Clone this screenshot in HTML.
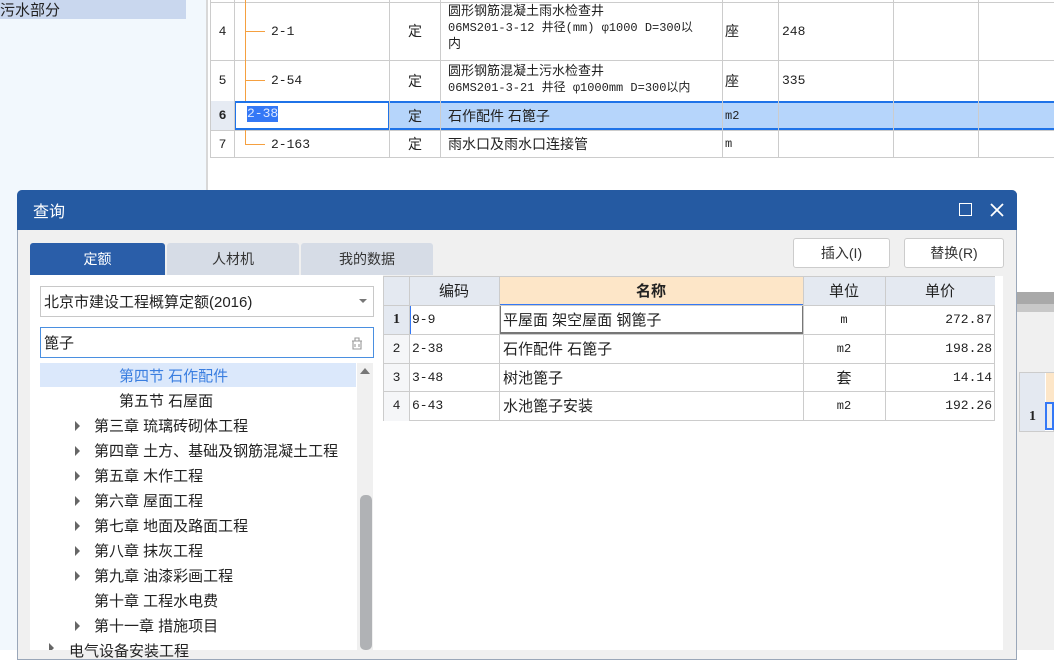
<!DOCTYPE html>
<html><head><meta charset="utf-8"><style>
*{margin:0;padding:0;box-sizing:border-box}
body{width:1054px;height:650px;overflow:hidden;position:relative;background:#fff;font-family:"Liberation Sans","Noto Sans CJK SC",sans-serif;font-size:14px;color:#222}
.a{position:absolute}
.c{position:absolute;display:flex;align-items:center;white-space:nowrap;overflow:hidden}
.m{font-family:"Liberation Mono","Noto Sans CJK SC",monospace;font-size:13px}
</style></head><body>
<!-- left nav -->
<div class="a" style="left:0;top:0;width:208px;height:650px;background:#f2f8fd;border-right:2px solid #d8d8d8"></div>
<div class="c" style="left:0;top:0;width:186px;height:19px;background:#c9d7ee;font-size:15px">污水部分</div>
<!-- main table -->
<div class="a" style="left:210px;top:0;width:844px;height:158px;border-bottom:1px solid #ccc"></div>
<div class="a" style="left:210px;top:101px;width:844px;height:29px;background:#b6d5fb"></div>
<div class="a" style="left:210px;top:101px;width:25px;height:29px;background:#e6ebf3"></div>
<div class="a" style="left:234px;top:101px;width:156px;height:29px;background:#fff;border:2px solid #1f73e8"></div>
<div class="a" style="left:389px;top:101px;width:665px;height:29px;border-top:2px solid #1f73e8;border-bottom:2px solid #1f73e8"></div>
<!-- horizontal lines -->
<div class="a" style="left:210px;top:2px;width:844px;height:1px;background:#ccc"></div>
<div class="a" style="left:210px;top:60px;width:844px;height:1px;background:#ccc"></div>
<div class="a" style="left:210px;top:130px;width:844px;height:1px;background:#ccc"></div>
<!-- vertical lines -->
<div class="a" style="left:210px;top:0;width:1px;height:158px;background:#ccc"></div>
<div class="a" style="left:234px;top:0;width:1px;height:158px;background:#ccc"></div>
<div class="a" style="left:389px;top:0;width:1px;height:158px;background:#ccc"></div>
<div class="a" style="left:440px;top:0;width:1px;height:158px;background:#ccc"></div>
<div class="a" style="left:722px;top:0;width:1px;height:158px;background:#ccc"></div>
<div class="a" style="left:778px;top:0;width:1px;height:158px;background:#ccc"></div>
<div class="a" style="left:893px;top:0;width:1px;height:158px;background:#ccc"></div>
<div class="a" style="left:978px;top:0;width:1px;height:158px;background:#ccc"></div>
<!-- orange tree lines -->
<div class="a" style="left:245px;top:0;width:1px;height:101px;background:#f5a040"></div>
<div class="a" style="left:245px;top:130px;width:1px;height:14px;background:#f5a040"></div>
<div class="a" style="left:245px;top:31px;width:20px;height:1px;background:#f5a040"></div>
<div class="a" style="left:245px;top:80px;width:20px;height:1px;background:#f5a040"></div>
<div class="a" style="left:245px;top:144px;width:20px;height:1px;background:#f5a040"></div>
<div class="c m" style="left:210px;top:2px;width:25px;height:58px;justify-content:center">4</div>
<div class="c m" style="left:210px;top:60px;width:25px;height:41px;justify-content:center">5</div>
<div class="c m" style="left:210px;top:101px;width:25px;height:29px;justify-content:center;font-weight:bold">6</div>
<div class="c m" style="left:210px;top:130px;width:25px;height:28px;justify-content:center">7</div>
<div class="c m" style="left:271px;top:2px;height:58px">2-1</div>
<div class="c m" style="left:271px;top:60px;height:41px">2-54</div>
<div class="a m" style="left:247px;top:106px;height:16px;background:#3478f6;color:#dfe9ff;line-height:16px">2-38</div>
<div class="c m" style="left:271px;top:130px;height:28px">2-163</div>
<div class="c" style="left:390px;top:2px;width:50px;height:58px;justify-content:center">定</div>
<div class="c" style="left:390px;top:60px;width:50px;height:41px;justify-content:center">定</div>
<div class="c" style="left:390px;top:101px;width:50px;height:29px;justify-content:center">定</div>
<div class="c" style="left:390px;top:130px;width:50px;height:28px;justify-content:center">定</div>
<div class="a" style="left:448px;top:3px;width:272px;font-size:13px;line-height:16px;overflow:hidden">圆形钢筋混凝土雨水检查井<br><span class="m" style="font-size:12px">06MS201-3-12 井径(mm) φ1000 D=300以</span><br>内</div>
<div class="a" style="left:448px;top:63px;width:272px;font-size:13px;line-height:16px;overflow:hidden">圆形钢筋混凝土污水检查井<br><span class="m" style="font-size:12px">06MS201-3-21 井径 φ1000mm D=300以内</span></div>
<div class="c" style="left:448px;top:101px;height:29px">石作配件 石篦子</div>
<div class="c" style="left:448px;top:130px;height:28px">雨水口及雨水口连接管</div>
<div class="c" style="left:725px;top:2px;height:58px">座</div>
<div class="c" style="left:725px;top:60px;height:41px">座</div>
<div class="c m" style="left:725px;top:101px;height:29px;font-size:12px">m2</div>
<div class="c m" style="left:725px;top:130px;height:28px;font-size:12px">m</div>
<div class="c m" style="left:782px;top:2px;height:58px">248</div>
<div class="c m" style="left:782px;top:60px;height:41px">335</div>
<!-- behind right strip -->
<div class="a" style="left:1016px;top:292px;width:38px;height:12px;background:#a9a9a9"></div>
<div class="a" style="left:1016px;top:304px;width:38px;height:8px;background:#c8c8c8"></div>
<div class="a" style="left:1016px;top:312px;width:38px;height:338px;background:#f0f0f0"></div>
<div class="a" style="left:1019px;top:372px;width:35px;height:60px;background:#fff;border:1px solid #ccc"></div>
<div class="a" style="left:1020px;top:373px;width:25px;height:58px;background:#e4e9f1"></div>
<div class="a" style="left:1046px;top:373px;width:8px;height:29px;background:#fde6c8"></div>
<div class="a" style="left:1045px;top:402px;width:9px;height:28px;background:#eee;border:2px solid #3478f6"></div>
<div class="c" style="left:1020px;top:402px;width:25px;height:29px;justify-content:center;font-weight:bold;font-family:'Liberation Serif',serif">1</div>
<!-- dialog -->
<div class="a" style="left:17px;top:190px;width:1000px;height:470px;background:#f0f0f0;border:1px solid #9aa7b9;border-radius:5px 5px 0 0"></div>
<div class="a" style="left:17px;top:190px;width:1000px;height:40px;background:#255aa2;border-radius:5px 5px 0 0"></div>
<div class="c" style="left:33px;top:190px;height:40px;color:#fff;font-size:16px">查询</div>
<div class="a" style="left:959px;top:203px;width:13px;height:13px;border:1.5px solid #fff"></div>
<svg class="a" style="left:990px;top:203px" width="14" height="14"><path d="M1 1L13 13M13 1L1 13" stroke="#fff" stroke-width="1.8"/></svg>
<!-- tabs -->
<div class="c" style="left:30px;top:243px;width:135px;height:32px;background:#2a5ea9;color:#fff;justify-content:center;border-radius:3px 3px 0 0">定额</div>
<div class="c" style="left:167px;top:243px;width:132px;height:32px;background:#d6dce6;color:#333;justify-content:center;border-radius:3px 3px 0 0">人材机</div>
<div class="c" style="left:301px;top:243px;width:132px;height:32px;background:#d6dce6;color:#333;justify-content:center;border-radius:3px 3px 0 0">我的数据</div>
<div class="c" style="left:793px;top:238px;width:97px;height:30px;background:#fff;border:1px solid #ccc;border-radius:3px;justify-content:center;color:#333">插入(I)</div>
<div class="c" style="left:904px;top:238px;width:100px;height:30px;background:#fff;border:1px solid #ccc;border-radius:3px;justify-content:center;color:#333">替换(R)</div>
<!-- left pane -->
<div class="a" style="left:30px;top:275px;width:353px;height:375px;background:#fff"></div>
<div class="c" style="left:40px;top:286px;width:334px;height:31px;border:1px solid #c8c8c8;padding-left:3px;font-size:15px">北京市建设工程概算定额(2016)</div>
<svg class="a" style="left:359px;top:299px" width="8" height="5"><path d="M0 0H8L4 4Z" fill="#777"/></svg>
<div class="c" style="left:40px;top:327px;width:334px;height:31px;border:1px solid #4a8fe0;padding-left:3px;font-size:15px">篦子</div>
<svg class="a" style="left:349px;top:335px" width="16" height="16"><path d="M3 6H13M4 6V14H12V6M6 6V3H10V6M6 9V12M10 9V12" stroke="#999" fill="none" stroke-width="1.1"/></svg>
<div class="a" style="left:40px;top:363px;width:316px;height:24px;background:#dbe8fb"></div>
<div class="a" style="left:357px;top:363px;width:16px;height:287px;background:#f0f0f0"></div>
<div class="a" style="left:360px;top:495px;width:12px;height:155px;background:#b0b2b5;border-radius:5px"></div>
<svg class="a" style="left:360px;top:368px" width="10" height="6"><path d="M0 6L5 0L10 6Z" fill="#777"/></svg>
<div class="c" style="left:119px;top:363px;height:25px;color:#3a7ee0;font-size:15px">第四节 石作配件</div>
<div class="c" style="left:119px;top:388px;height:25px;font-size:15px">第五节 石屋面</div>
<div id="tree"></div>
<!-- right grid -->
<div class="a" style="left:383px;top:276px;width:620px;height:374px;background:#fff"></div>
<div class="a" style="left:383px;top:276px;width:612px;height:145px;border:1px solid #ccc"></div>
<div class="a" style="left:384px;top:277px;width:115px;height:28px;background:#e4e9f1"></div>
<div class="a" style="left:499px;top:277px;width:304px;height:28px;background:#fde6c8"></div>
<div class="a" style="left:803px;top:277px;width:192px;height:28px;background:#e4e9f1"></div>
<div class="a" style="left:384px;top:305px;width:25px;height:116px;background:#f5f6f8"></div>
<div class="a" style="left:384px;top:305px;width:25px;height:29px;background:#e4e9f1"></div>
<div class="a" style="left:409px;top:305px;width:2px;height:29px;background:#3478f6"></div>
<div class="a" style="left:499px;top:304px;width:305px;height:30px;border:2px solid #777;border-top:1px solid #3478f6"></div>
<div class="a" style="left:383px;top:305px;width:612px;height:1px;background:#ccc"></div>
<div class="a" style="left:383px;top:334px;width:612px;height:1px;background:#ccc"></div>
<div class="a" style="left:383px;top:363px;width:612px;height:1px;background:#ccc"></div>
<div class="a" style="left:383px;top:391px;width:612px;height:1px;background:#ccc"></div>
<div class="a" style="left:409px;top:276px;width:1px;height:145px;background:#ccc"></div>
<div class="a" style="left:499px;top:276px;width:1px;height:145px;background:#ccc"></div>
<div class="a" style="left:803px;top:276px;width:1px;height:145px;background:#ccc"></div>
<div class="a" style="left:885px;top:276px;width:1px;height:145px;background:#ccc"></div>
<div class="c" style="left:409px;top:276px;width:90px;height:29px;justify-content:center;font-size:15px">编码</div>
<div class="c" style="left:499px;top:276px;width:304px;height:29px;justify-content:center;font-size:15px;font-weight:bold">名称</div>
<div class="c" style="left:803px;top:276px;width:82px;height:29px;justify-content:center;font-size:15px">单位</div>
<div class="c" style="left:885px;top:276px;width:110px;height:29px;justify-content:center;font-size:15px">单价</div>
<div class="c" style="left:384px;top:305px;width:25px;height:29px;justify-content:center;font-weight:bold;font-family:'Liberation Serif',serif">1</div>
<div class="c m" style="left:384px;top:334px;width:25px;height:29px;justify-content:center">2</div>
<div class="c m" style="left:384px;top:363px;width:25px;height:28px;justify-content:center">3</div>
<div class="c m" style="left:384px;top:391px;width:25px;height:29px;justify-content:center">4</div>
<div class="c m" style="left:412px;top:305px;height:29px">9-9</div>
<div class="c m" style="left:412px;top:334px;height:29px">2-38</div>
<div class="c m" style="left:412px;top:363px;height:28px">3-48</div>
<div class="c m" style="left:412px;top:391px;height:29px">6-43</div>
<div class="c" style="left:503px;top:305px;height:29px;font-size:15px">平屋面 架空屋面 钢篦子</div>
<div class="c" style="left:503px;top:334px;height:29px;font-size:15px">石作配件 石篦子</div>
<div class="c" style="left:503px;top:363px;height:28px;font-size:15px">树池篦子</div>
<div class="c" style="left:503px;top:391px;height:29px;font-size:15px">水池篦子安装</div>
<div class="c m" style="left:803px;top:305px;width:82px;height:29px;justify-content:center;font-size:12px">m</div>
<div class="c m" style="left:803px;top:334px;width:82px;height:29px;justify-content:center;font-size:12px">m2</div>
<div class="c" style="left:803px;top:363px;width:82px;height:28px;justify-content:center;font-size:15px">套</div>
<div class="c m" style="left:803px;top:391px;width:82px;height:29px;justify-content:center;font-size:12px">m2</div>
<div class="c m" style="left:885px;top:305px;width:107px;height:29px;justify-content:flex-end">272.87</div>
<div class="c m" style="left:885px;top:334px;width:107px;height:29px;justify-content:flex-end">198.28</div>
<div class="c m" style="left:885px;top:363px;width:107px;height:28px;justify-content:flex-end">14.14</div>
<div class="c m" style="left:885px;top:391px;width:107px;height:29px;justify-content:flex-end">192.26</div>
<!-- tree items -->
<svg class="a" style="left:0;top:0" width="400" height="650">
<g fill="#666">
<path d="M75 421l5 5-5 5z"/><path d="M75 446l5 5-5 5z"/><path d="M75 471l5 5-5 5z"/><path d="M75 496l5 5-5 5z"/><path d="M75 521l5 5-5 5z"/><path d="M75 546l5 5-5 5z"/><path d="M75 571l5 5-5 5z"/><path d="M75 621l5 5-5 5z"/><path d="M49 643l5 5-5 5z"/>
</g></svg>
<div class="c" style="left:94px;top:413px;height:25px;font-size:15px">第三章 琉璃砖砌体工程</div>
<div class="c" style="left:94px;top:438px;height:25px;font-size:15px">第四章 土方、基础及钢筋混凝土工程</div>
<div class="c" style="left:94px;top:463px;height:25px;font-size:15px">第五章 木作工程</div>
<div class="c" style="left:94px;top:488px;height:25px;font-size:15px">第六章 屋面工程</div>
<div class="c" style="left:94px;top:513px;height:25px;font-size:15px">第七章 地面及路面工程</div>
<div class="c" style="left:94px;top:538px;height:25px;font-size:15px">第八章 抹灰工程</div>
<div class="c" style="left:94px;top:563px;height:25px;font-size:15px">第九章 油漆彩画工程</div>
<div class="c" style="left:94px;top:588px;height:25px;font-size:15px">第十章 工程水电费</div>
<div class="c" style="left:94px;top:613px;height:25px;font-size:15px">第十一章 措施项目</div>
<div class="c" style="left:69px;top:638px;height:25px;font-size:15px">电气设备安装工程</div>
</body></html>
